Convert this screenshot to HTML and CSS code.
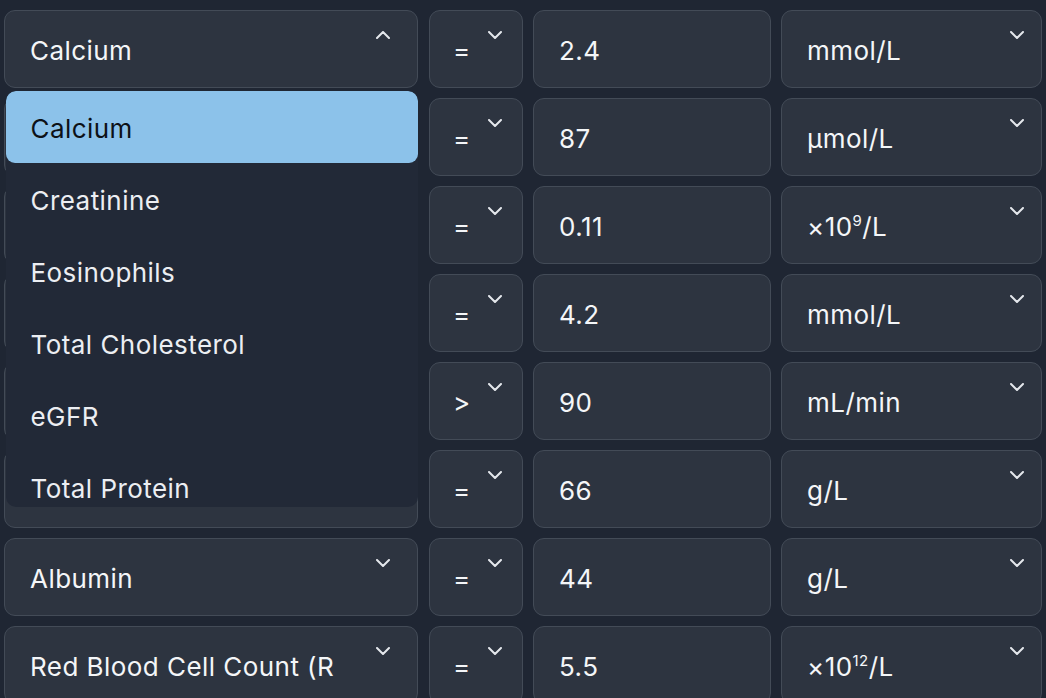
FILE: index.html
```html
<!DOCTYPE html>
<html>
    <head>
        <title>Lab Results</title>
        <link rel="stylesheet" href="styles.css">
    </head>
    <body>
        <div id="grid">
            <div class="field test open">
                <span>Calcium</span>
                <svg class="chev" viewBox="0 0 14 8"><polyline points="1,7 7,1 13,7"/></svg>
                <ul class="menu">
                    <li class="active">Calcium</li>
                    <li>Creatinine</li>
                    <li>Eosinophils</li>
                    <li>Total Cholesterol</li>
                    <li>eGFR</li>
                    <li>Total Protein</li>
                </ul>
            </div>
            <div class="field op"><span>=</span><svg class="chev" viewBox="0 0 14 8"><polyline points="1,1 7,7 13,1"/></svg></div>
            <div class="field val"><span>2.4</span></div>
            <div class="field unit"><span>mmol/L</span><svg class="chev" viewBox="0 0 14 8"><polyline points="1,1 7,7 13,1"/></svg></div>

            <div class="field test covered"><span>Creatinine</span><svg class="chev" viewBox="0 0 14 8"><polyline points="1,1 7,7 13,1"/></svg></div>
            <div class="field op"><span>=</span><svg class="chev" viewBox="0 0 14 8"><polyline points="1,1 7,7 13,1"/></svg></div>
            <div class="field val"><span>87</span></div>
            <div class="field unit"><span>µmol/L</span><svg class="chev" viewBox="0 0 14 8"><polyline points="1,1 7,7 13,1"/></svg></div>

            <div class="field test covered"><span>Eosinophils</span><svg class="chev" viewBox="0 0 14 8"><polyline points="1,1 7,7 13,1"/></svg></div>
            <div class="field op"><span>=</span><svg class="chev" viewBox="0 0 14 8"><polyline points="1,1 7,7 13,1"/></svg></div>
            <div class="field val"><span>0.11</span></div>
            <div class="field unit"><span>×10<sup>9</sup>/L</span><svg class="chev" viewBox="0 0 14 8"><polyline points="1,1 7,7 13,1"/></svg></div>

            <div class="field test covered"><span>Total Cholesterol</span><svg class="chev" viewBox="0 0 14 8"><polyline points="1,1 7,7 13,1"/></svg></div>
            <div class="field op"><span>=</span><svg class="chev" viewBox="0 0 14 8"><polyline points="1,1 7,7 13,1"/></svg></div>
            <div class="field val"><span>4.2</span></div>
            <div class="field unit"><span>mmol/L</span><svg class="chev" viewBox="0 0 14 8"><polyline points="1,1 7,7 13,1"/></svg></div>

            <div class="field test covered"><span>eGFR</span><svg class="chev" viewBox="0 0 14 8"><polyline points="1,1 7,7 13,1"/></svg></div>
            <div class="field op"><span>&gt;</span><svg class="chev" viewBox="0 0 14 8"><polyline points="1,1 7,7 13,1"/></svg></div>
            <div class="field val"><span>90</span></div>
            <div class="field unit"><span>mL/min</span><svg class="chev" viewBox="0 0 14 8"><polyline points="1,1 7,7 13,1"/></svg></div>

            <div class="field test covered"><span>Total Protein</span><svg class="chev" viewBox="0 0 14 8"><polyline points="1,1 7,7 13,1"/></svg></div>
            <div class="field op"><span>=</span><svg class="chev" viewBox="0 0 14 8"><polyline points="1,1 7,7 13,1"/></svg></div>
            <div class="field val"><span>66</span></div>
            <div class="field unit"><span>g/L</span><svg class="chev" viewBox="0 0 14 8"><polyline points="1,1 7,7 13,1"/></svg></div>

            <div class="field test"><span>Albumin</span><svg class="chev" viewBox="0 0 14 8"><polyline points="1,1 7,7 13,1"/></svg></div>
            <div class="field op"><span>=</span><svg class="chev" viewBox="0 0 14 8"><polyline points="1,1 7,7 13,1"/></svg></div>
            <div class="field val"><span>44</span></div>
            <div class="field unit"><span>g/L</span><svg class="chev" viewBox="0 0 14 8"><polyline points="1,1 7,7 13,1"/></svg></div>

            <div class="field test"><span>Red Blood Cell Count (R</span><svg class="chev" viewBox="0 0 14 8"><polyline points="1,1 7,7 13,1"/></svg></div>
            <div class="field op"><span>=</span><svg class="chev" viewBox="0 0 14 8"><polyline points="1,1 7,7 13,1"/></svg></div>
            <div class="field val"><span>5.5</span></div>
            <div class="field unit"><span>×10<sup>12</sup>/L</span><svg class="chev" viewBox="0 0 14 8"><polyline points="1,1 7,7 13,1"/></svg></div>
        </div>
    </body>
</html>
```
FILE: styles.css
```css
body {
    margin: 0;
    background-color: #1f2633;
    color: #f4f6f8;
    font-family: Inter, "Noto Sans", sans-serif;
    font-size: 26px;
    letter-spacing: 0.45px;
    overflow: hidden;
}

div#grid {
    display: grid;
    grid-template-columns: 414px 95px 238px 1fr;
    grid-auto-rows: 78px;
    column-gap: 10px;
    row-gap: 10px;
    padding: 10px 4px 0 4px;
}

.field {
    position: relative;
    display: flex;
    align-items: center;
    padding: 3px 0 0 25px;
    background-color: #2d3440;
    border: 1.5px solid #434b57;
    border-radius: 11px;
    white-space: nowrap;
}
.field.op {
    margin-left: 1px;
    padding-left: 23px;
}
/* rows hidden behind the open menu */
.field.covered > span {
    visibility: hidden;
}
.field sup {
    font-size: 15px;
    vertical-align: 10px;
    line-height: 0;
}

.chev {
    position: absolute;
    top: 20px;
    right: 27px;
    width: 14px;
    height: 8px;
    fill: none;
    stroke: #e4e7ec;
    stroke-width: 2;
    stroke-linecap: round;
    stroke-linejoin: round;
}
.field.op .chev {
    right: 20px;
}
.field.unit .chev {
    right: 17px;
}

ul.menu {
    position: absolute;
    z-index: 2;
    top: 80px;
    left: 0.5px;
    width: 412px;
    height: 416px;
    margin: 0;
    padding: 0;
    list-style: none;
    background-color: #222937;
    border-radius: 10px;
    overflow: hidden;
}
ul.menu > li {
    height: 72px;
    display: flex;
    align-items: center;
    padding: 2px 0 0 25px;
    box-sizing: border-box;
    color: #eceef2;
}
ul.menu > li.active {
    background-color: #8cc2ea;
    color: #0d1117;
    border-radius: 9px;
}
```
